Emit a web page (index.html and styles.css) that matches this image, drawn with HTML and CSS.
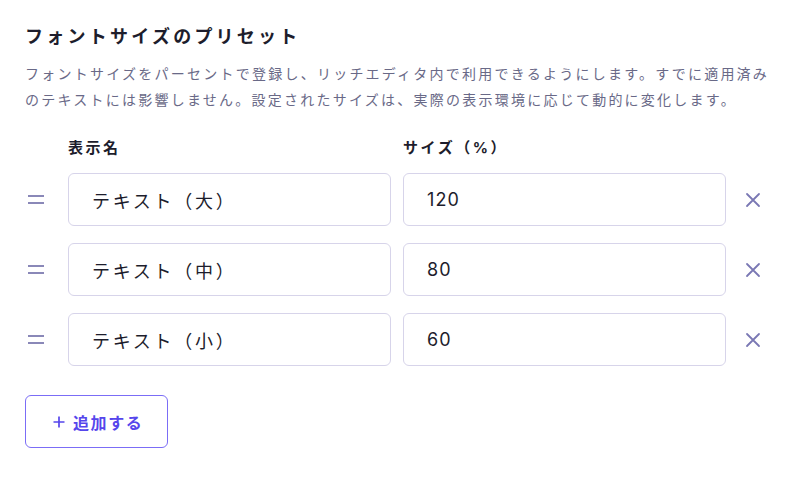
FILE: index.html
```html
<!DOCTYPE html>
<html lang="ja">
<head>
    <meta charset="UTF-8">
    <meta name="viewport" content="width=device-width, initial-scale=1.0">
    <title>フォントサイズのプリセット</title>
    <link rel="stylesheet" href="styles.css">
</head>
<body>
    <section class="preset">
        <h2 class="title">フォントサイズのプリセット</h2>
        <p class="desc">フォントサイズをパーセントで登録し、リッチエディタ内で利用できるようにします。すでに適用済みのテキストには影響しません。設定されたサイズは、実際の表示環境に応じて動的に変化します。</p>

        <div class="row head">
            <span class="handle-space"></span>
            <span class="label">表示名</span>
            <span class="label">サイズ（%）</span>
        </div>

        <div class="list">
            <div class="row">
                <span class="handle"></span>
                <div class="field">テキスト（大）</div>
                <div class="field num">120</div>
                <button class="remove" aria-label="削除">
                    <svg width="16" height="16" viewBox="0 0 16 16"><path d="M2 2L14 14M14 2L2 14" stroke="currentColor" stroke-width="1.8" stroke-linecap="round"/></svg>
                </button>
            </div>
            <div class="row">
                <span class="handle"></span>
                <div class="field">テキスト（中）</div>
                <div class="field num">80</div>
                <button class="remove" aria-label="削除">
                    <svg width="16" height="16" viewBox="0 0 16 16"><path d="M2 2L14 14M14 2L2 14" stroke="currentColor" stroke-width="1.8" stroke-linecap="round"/></svg>
                </button>
            </div>
            <div class="row">
                <span class="handle"></span>
                <div class="field">テキスト（小）</div>
                <div class="field num">60</div>
                <button class="remove" aria-label="削除">
                    <svg width="16" height="16" viewBox="0 0 16 16"><path d="M2 2L14 14M14 2L2 14" stroke="currentColor" stroke-width="1.8" stroke-linecap="round"/></svg>
                </button>
            </div>
        </div>

        <button class="add">
            <svg class="plus" width="12" height="12" viewBox="0 0 12 12"><path d="M6 0.5V11.5M0.5 6H11.5" stroke="currentColor" stroke-width="1.7"/></svg>
            <span>追加する</span>
        </button>
    </section>
</body>
</html>
```

FILE: styles.css
```css
body{
    margin: 0;
    background: #fff;
    font-family: Inter, "Noto Sans CJK JP", sans-serif;
    color: #1d1d2c;
}
.preset{
    padding: 24px 25px;
}
.title{
    margin: 0;
    font-size: 18px;
    line-height: 26px;
    font-weight: 700;
    letter-spacing: 0.18em;
}
.desc{
    margin: 11px 0 0 0;
    font-size: 14px;
    line-height: 26px;
    letter-spacing: 0.16em;
    color: #696987;
    width: 760px;
}
.row{
    display: flex;
    align-items: center;
}
.head{
    margin-top: 25px;
    height: 20px;
}
.handle-space{
    width: 43px;
}
.label{
    width: 335px;
    font-size: 15px;
    font-weight: 700;
    letter-spacing: 0.17em;
    line-height: 20px;
}
.list{
    margin-top: 15px;
    display: flex;
    flex-direction: column;
    gap: 17px;
}
.handle{
    width: 16px;
    height: 5px;
    margin: 0 24px 0 3px;
    border-top: 2px solid #8a88b8;
    border-bottom: 2px solid #8a88b8;
}
.field{
    box-sizing: border-box;
    width: 323px;
    height: 53px;
    margin-right: 12px;
    padding: 0 23px;
    border: 1px solid #d7d4ea;
    border-radius: 6px;
    display: flex;
    align-items: center;
    font-size: 18px;
    letter-spacing: 0.15em;
    color: #1d1d2c;
}
.num{
    margin-right: 0;
    letter-spacing: 0.06em;
}
.remove{
    margin-left: 19px;
    padding: 0;
    border: none;
    background: none;
    color: #7a78b4;
    width: 16px;
    height: 16px;
    display: flex;
}
.add{
    margin-top: 29px;
    height: 53px;
    padding: 0 24px 0 27px;
    display: flex;
    align-items: center;
    gap: 8px;
    background: #fff;
    border: 1.5px solid #7b6df6;
    border-radius: 6px;
    color: #5646ec;
    font-family: inherit;
    font-size: 16px;
    font-weight: 700;
    letter-spacing: 0.1em;
}
.plus{
    flex: none;
}
```
